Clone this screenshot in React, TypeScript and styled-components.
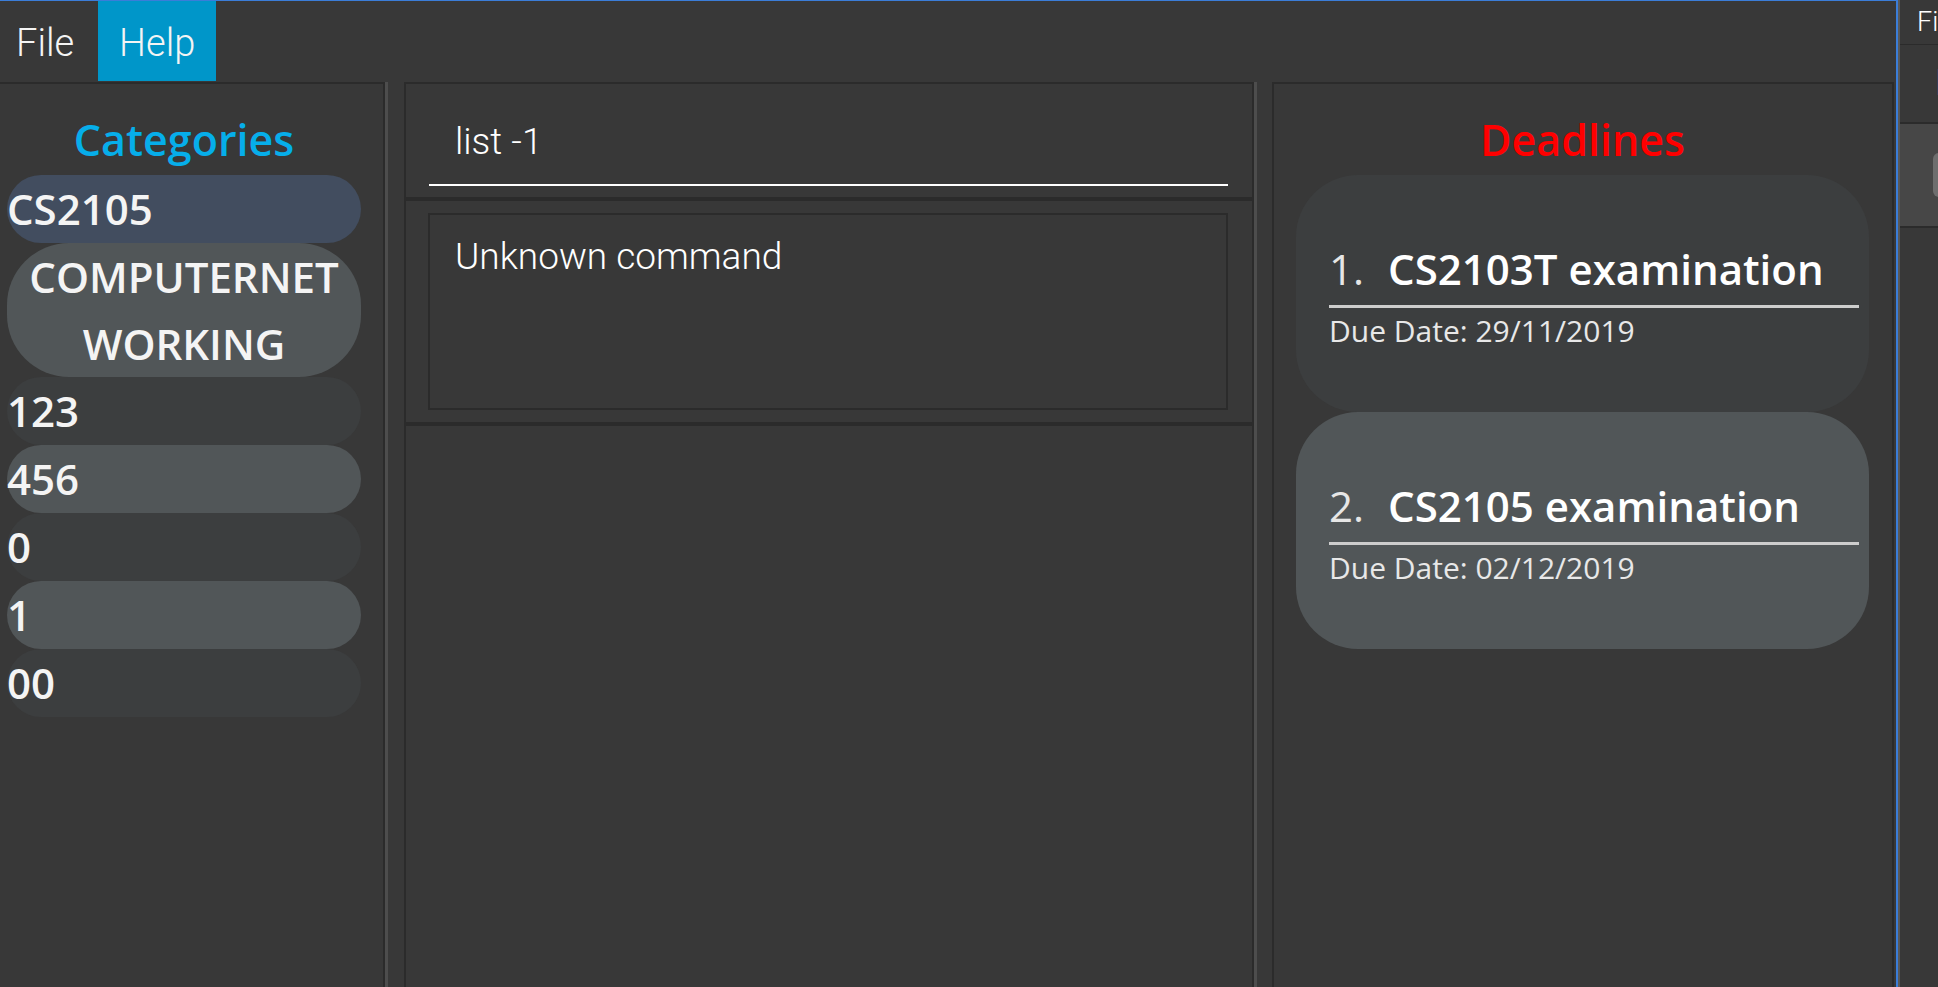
import React from 'react'
import styled, { createGlobalStyle } from 'styled-components'

const COLOR = {
  BG: '#383838',
  BORDER: '#2b2b2b',
  SPLITTER: '#4d4d4d',
  TEXT: '#f4f4f4',
  ACCENT: '#0096c9',
  WINDOW_EDGE: '#3b7dd8',
  ROW_EVEN: '#3c3e3f',
  ROW_ODD: '#515658',
  ROW_SELECTED: '#424d5f',
  CATEGORY_TITLE: '#06aeea',
  DEADLINE_TITLE: '#ff0000',
} as const

// thin face for the menu, the command line and the result text
const LIGHT_FONT = `'Roboto', 'Open Sans', sans-serif`

type Tone = 'even' | 'odd' | 'selected'

const toneColor = (tone: Tone) =>
  tone === 'selected' ? COLOR.ROW_SELECTED : tone === 'odd' ? COLOR.ROW_ODD : COLOR.ROW_EVEN

const GlobalStyle = createGlobalStyle`
  html, body, #root {
    height: 100%;
  }

  body {
    margin: 0;
    background: ${COLOR.BG};
    font-family: 'Open Sans', 'Noto Sans', sans-serif;
    overflow: hidden;
  }

  * {
    box-sizing: border-box;
  }
`

const Desktop = styled.div`
  display: flex;
  width: 1938px;
  height: 987px;
  overflow: hidden;
`

const Window = styled.div`
  flex: 0 0 1898px;
  display: flex;
  flex-direction: column;
  min-width: 0;
  background: ${COLOR.BG};
  border-top: 1px solid ${COLOR.WINDOW_EDGE};
  border-right: 2px solid ${COLOR.WINDOW_EDGE};
`

const MenuBar = styled.nav`
  display: flex;
  flex-shrink: 0;
  height: 80px;
`

const MenuItem = styled.div<{ $active?: boolean }>`
  display: flex;
  align-items: center;
  padding: 3px 21px 0;
  font-family: ${LIGHT_FONT};
  font-size: 38px;
  font-weight: 300;
  color: ${COLOR.TEXT};
  background: ${({ $active }) => ($active ? COLOR.ACCENT : 'transparent')};

  &:first-child {
    padding: 3px 24px 0 16px;
  }
`

const Workspace = styled.div`
  flex: 1;
  display: flex;
  min-height: 0;
  padding-top: 1px;
`

const Panel = styled.section<{ $width: number; $flushLeft?: boolean }>`
  flex: 0 0 ${({ $width }) => $width}px;
  display: flex;
  flex-direction: column;
  min-height: 0;
  border: 2px solid ${COLOR.BORDER};
  border-bottom: none;
  ${({ $flushLeft }) => $flushLeft && 'border-left: none;'}
`

const PanelBody = styled.div<{ $left: number; $right: number }>`
  padding: 0 ${({ $right }) => $right}px 0 ${({ $left }) => $left}px;
`

const Splitter = styled.div<{ $width: number }>`
  flex: 0 0 ${({ $width }) => $width}px;
  border-left: 3px solid ${COLOR.SPLITTER};
`

const PanelTitle = styled.h2<{ $color: string }>`
  margin: 31px 0 10px;
  text-align: center;
  font-size: 43px;
  line-height: 50px;
  font-weight: 600;
  color: ${({ $color }) => $color};
`

const CategoryList = styled.ul`
  list-style: none;
  margin: 0;
  padding: 0;
`

const CategoryRow = styled.li<{ $tone: Tone; $wrapped?: boolean }>`
  min-height: 68px;
  padding: ${({ $wrapped }) => ($wrapped ? '0 12px' : '0')};
  border-radius: 62px;
  background: ${({ $tone }) => toneColor($tone)};
  color: ${COLOR.TEXT};
  font-size: 42px;
  font-weight: 600;
  line-height: 67px;
  text-align: ${({ $wrapped }) => ($wrapped ? 'center' : 'left')};
  overflow-wrap: anywhere;
`

const CommandArea = styled.div`
  flex-shrink: 0;
  padding: 34px 24px 11px 23px;
  border-bottom: 4px solid ${COLOR.BORDER};
`

const CommandField = styled.div`
  height: 68px;
  padding-left: 26px;
  border-bottom: 2px solid #ffffff;
  font-family: ${LIGHT_FONT};
  font-size: 37px;
  font-weight: 300;
  line-height: 48px;
  color: #ffffff;
`

const ResultArea = styled.div`
  flex-shrink: 0;
  padding: 12px 24px 12px 22px;
  border-bottom: 4px solid ${COLOR.BORDER};
`

const ResultBox = styled.div`
  height: 197px;
  padding: 18px 25px;
  border: 2px solid ${COLOR.BORDER};
  font-family: ${LIGHT_FONT};
  font-size: 37px;
  font-weight: 300;
  line-height: 48px;
  color: #ffffff;
`

const DeadlineCard = styled.article<{ $tone: Tone }>`
  padding: 69px 10px 61px 33px;
  border-radius: 62px;
  background: ${({ $tone }) => toneColor($tone)};
`

const DeadlineTitle = styled.div`
  display: flex;
  align-items: baseline;
  padding-bottom: 11px;
  border-bottom: 3px solid #cdcdcd;
  font-size: 42px;
  line-height: 50px;
  font-weight: 600;
  color: #ffffff;
  white-space: nowrap;
`

const DeadlineIndex = styled.span`
  margin-right: 24px;
  font-weight: 400;
  color: #e6e6e6;
`

const DueDate = styled.div`
  margin-top: 3px;
  font-size: 30px;
  line-height: 40px;
  color: #e8e8e8;
`

const Seam = styled.div`
  flex: 0 0 2px;
  background: #595959;
`

const NeighbourWindow = styled.div`
  flex: 1;
  display: flex;
  flex-direction: column;
  min-width: 0;
  overflow: hidden;
  background: ${COLOR.BG};
  white-space: nowrap;
`

const NeighbourMenu = styled.div`
  flex: 0 0 45px;
  padding-left: 17px;
  border-bottom: 1px solid ${COLOR.BORDER};
  font-family: ${LIGHT_FONT};
  font-size: 27px;
  font-weight: 300;
  line-height: 44px;
  color: #ffffff;
`

const NeighbourCommand = styled.div`
  flex: 0 0 79px;
  padding-left: 35px;
  border-bottom: 2px solid ${COLOR.BORDER};
  font-family: ${LIGHT_FONT};
  font-size: 36px;
  font-weight: 300;
  line-height: 77px;
  color: #dedede;
`

const NeighbourResult = styled.div`
  flex: 0 0 104px;
  padding: 29px 0 0 33px;
  background: #474747;
  border-bottom: 2px solid ${COLOR.BORDER};
`

const NeighbourButton = styled.div`
  width: 40px;
  height: 44px;
  border-radius: 6px;
  background: #6e6e6e;
`

const categories = ['CS2105', 'COMPUTERNETWORKING', '123', '456', '0', '1', '00']

const deadlines = [
  { name: 'CS2103T examination', due: '29/11/2019' },
  { name: 'CS2105 examination', due: '02/12/2019' },
]

const toneOf = (index: number, selected = -1): Tone =>
  index === selected ? 'selected' : index % 2 === 0 ? 'even' : 'odd'

const App: React.FC = () => {
  return (
    <Desktop>
      <GlobalStyle />
      <Window>
        <MenuBar>
          <MenuItem>File</MenuItem>
          <MenuItem $active>Help</MenuItem>
        </MenuBar>
        <Workspace>
          <Panel $width={385} $flushLeft>
            <PanelBody $left={7} $right={22}>
              <PanelTitle $color={COLOR.CATEGORY_TITLE}>Categories</PanelTitle>
              <CategoryList>
                {categories.map((item, index) => (
                  <CategoryRow key={index} $tone={toneOf(index, 0)} $wrapped={item.length > 12}>
                    {item}
                  </CategoryRow>
                ))}
              </CategoryList>
            </PanelBody>
          </Panel>
          <Splitter $width={19} />
          <Panel $width={850}>
            <CommandArea>
              <CommandField>list -1</CommandField>
            </CommandArea>
            <ResultArea>
              <ResultBox>Unknown command</ResultBox>
            </ResultArea>
          </Panel>
          <Splitter $width={18} />
          <Panel $width={622}>
            <PanelBody $left={22} $right={23}>
              <PanelTitle $color={COLOR.DEADLINE_TITLE}>Deadlines</PanelTitle>
              {deadlines.map((item, index) => (
                <DeadlineCard key={index} $tone={toneOf(index)}>
                  <DeadlineTitle>
                    <DeadlineIndex>{index + 1}.</DeadlineIndex>
                    {item.name}
                  </DeadlineTitle>
                  <DueDate>Due Date: {item.due}</DueDate>
                </DeadlineCard>
              ))}
            </PanelBody>
          </Panel>
        </Workspace>
      </Window>
      <Seam />
      <NeighbourWindow>
        <NeighbourMenu>File</NeighbourMenu>
        <NeighbourCommand>Enter command here...</NeighbourCommand>
        <NeighbourResult>
          <NeighbourButton />
        </NeighbourResult>
      </NeighbourWindow>
    </Desktop>
  )
}

export default App
